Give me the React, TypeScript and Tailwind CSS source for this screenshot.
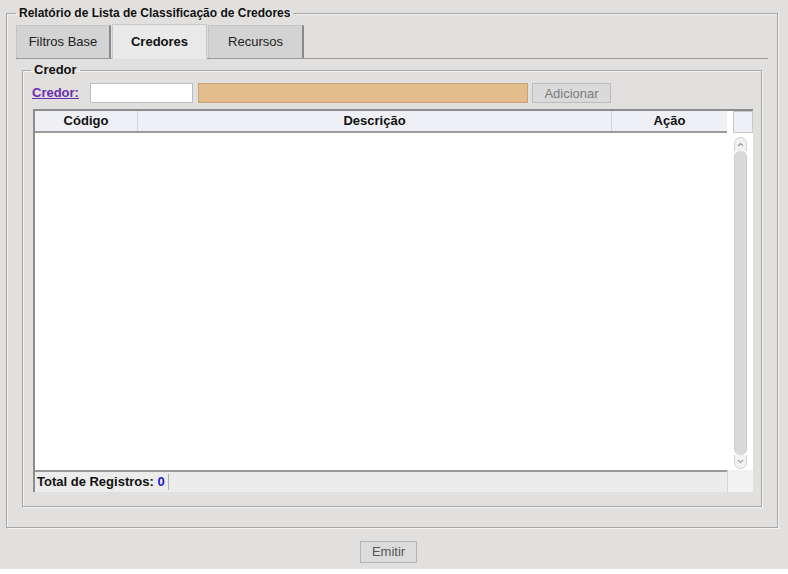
import { ChevronUp, ChevronDown } from 'lucide-react'

const font = { fontFamily: '"Liberation Sans", Arial, sans-serif' }

export default function App() {
  return (
    <div style={font} className="w-[788px] h-[569px] bg-[#e1e0de] pt-[3px] text-[#111]">
      {/* moldura principal */}
      <fieldset className="ml-[6px] w-[772px] h-[525px] border border-[#a6a6a6] shadow-[inset_1px_1px_0_#f4f4f4,1px_1px_0_#f4f4f4] px-[9px]">
        <legend className="px-[3px] text-[12px] font-bold leading-[20px]">
          Relatório de Lista de Classificação de Credores
        </legend>

        {/* abas */}
        <div className="flex items-end h-[35px] border-b border-[#9a9a9a] mt-[1px]">
          <Tab label="Filtros Base" w="w-[95px]" />
          <div className="w-[95px] h-[35px] ml-[1px] bg-[#e9e9e9] border-t border-l border-r border-[#c8c8c8] flex items-center justify-center text-[13px] font-bold -mb-px">
            Credores
          </div>
          <Tab label="Recursos" w="w-[96px]" />
        </div>

        {/* grupo credor */}
        <fieldset className="mx-[6px] mt-[1px] h-[447px] border border-[#a6a6a6] shadow-[inset_1px_1px_0_#f4f4f4,1px_1px_0_#f4f4f4] px-[8px]">
          <legend className="px-[3px] text-[13px] font-bold leading-[20px]">Credor</legend>

          <div className="pl-[2px]">
            <div className="flex items-center h-[20px] mt-[3px]">
              <a className="text-[13px] font-bold text-[#6a2fb0] underline w-[58px] cursor-pointer -ml-px">Credor:</a>
              <input className="w-[103px] h-[20px] bg-white border border-[#bdbdbd] outline-none" />
              <div className="w-[330px] h-[20px] ml-[5px] bg-[#e3bc8b] border border-[#c9a377]" />
              <button className="w-[79px] h-[20px] ml-[4px] bg-[#dadada] border border-[#bcbcbc] text-[13px] text-[#7a7a7a]">
                Adicionar
              </button>
            </div>

            {/* tabela */}
            <div className="mt-[6px] w-[720px] h-[383px] border-t-2 border-l-2 border-[#8c8c8c] bg-white flex flex-col">
              <div className="flex h-[22px] text-[13px] font-bold">
                <div className="flex w-[692px] bg-[#eff0f5] border-b-2 border-[#9a9a9a]">
                  <div className="w-[103px] flex items-center justify-center border-r border-[#d4d4d8]">Código</div>
                  <div className="w-[474px] flex items-center justify-center border-r border-[#d4d4d8]">Descrição</div>
                  <div className="flex-1 flex items-center justify-center">Ação</div>
                </div>
                <div className="w-[6px] bg-white" />
                <div className="w-[20px] bg-[#eff0f5] border border-[#c9c9c9]" />
              </div>

              <div className="flex flex-1">
                <div className="flex-1" />
                <div className="w-[13px] mr-[1px] mt-[4px] mb-[1px] flex flex-col">
                  <div className="h-[14px] rounded-t-full border border-b-0 border-[#d2d2d2] bg-[#f2f2f2] flex items-center justify-center">
                    <ChevronUp size={9} className="text-[#9a9a9a]" strokeWidth={3} />
                  </div>
                  <div className="flex-1 bg-[#dadada] border-x border-[#cccccc] rounded-[6px]" />
                  <div className="h-[14px] rounded-b-full border border-t-0 border-[#d2d2d2] bg-[#f2f2f2] flex items-center justify-center">
                    <ChevronDown size={9} className="text-[#9a9a9a]" strokeWidth={3} />
                  </div>
                </div>
                <div className="w-[5px]" />
              </div>

              <div className="flex h-[22px]">
                <div className="w-[692px] bg-[#ececec] border-t-2 border-[#9a9a9a] flex items-center pl-[2px] text-[13px] font-bold">
                  Total de Registros:&nbsp;<span className="text-[#1a1ad0]">0</span>
                  <span className="ml-[3px] h-[16px] border-l border-[#b0b0b0]" />
                </div>
                <div className="flex-1 bg-[#f2f2f2] border-l border-[#d6d6d6]" />
              </div>
            </div>
          </div>
        </fieldset>
      </fieldset>

      <div className="flex mt-[13px] pl-[360px]">
        <button className="w-[57px] h-[22px] bg-[#dcdcdc] border border-[#b5b5b5] text-[13px] text-[#555]">
          Emitir
        </button>
      </div>
    </div>
  )
}

function Tab({ label, w }: { label: string; w: string }) {
  return (
    <div className={`${w} h-[33px] bg-[#d3d3d3] border-t border-l border-[#c4c4c4] border-r-2 border-r-[#8a8a8a] flex items-center justify-center text-[13px] text-[#222] ${label === 'Recursos' ? 'ml-[1px]' : ''}`}>
      {label}
    </div>
  )
}
